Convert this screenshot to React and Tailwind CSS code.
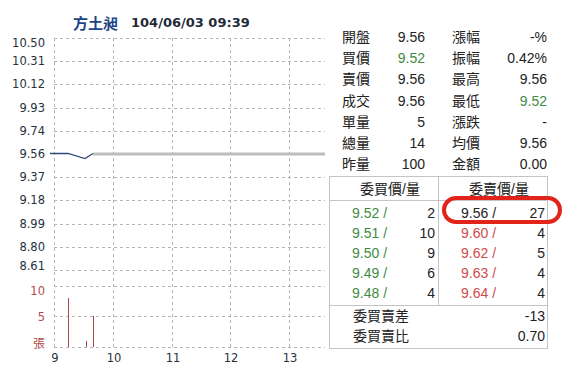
import React from "react";

// 分時走勢 + 五檔報價
const yTicks = ["10.50", "10.31", "10.12", "9.93", "9.74", "9.56", "9.37", "9.18", "8.99", "8.80", "8.61"];
const hours = [9, 10, 11, 12, 13];

const stats = [
  ["開盤", "9.56", "", "漲幅", "-%", ""],
  ["買價", "9.52", "text-[#3f8a44]", "振幅", "0.42%", ""],
  ["賣價", "9.56", "", "最高", "9.56", ""],
  ["成交", "9.56", "", "最低", "9.52", "text-[#3f8a44]"],
  ["單量", "5", "", "漲跌", "-", ""],
  ["總量", "14", "", "均價", "9.56", ""],
  ["昨量", "100", "", "金額", "0.00", ""],
];

const bids = [
  ["9.52", "2"],
  ["9.51", "10"],
  ["9.50", "9"],
  ["9.49", "6"],
  ["9.48", "4"],
];

const asks = [
  ["9.56", "27", "text-[#222]"],
  ["9.60", "4", "text-[#d04a4a]"],
  ["9.62", "5", "text-[#d04a4a]"],
  ["9.63", "4", "text-[#d04a4a]"],
  ["9.64", "4", "text-[#d04a4a]"],
];

const TOP = 38;
const STEP = 23.2;
const GRID_X = [54, 113, 172, 230, 289];

const gridH = yTicks
  .map((_, i) => Math.round(TOP + i * STEP) + 0.5)
  .filter((_, i) => i !== 5)
  .concat([286.5, 316.5, 347.5]);

function Chart() {
  const labelY = (i) => {
    const y = TOP + i * STEP;
    if (i === 0) return y + 5;
    if (i === yTicks.length - 1) return y - 4;
    return y;
  };
  return (
    <svg width="329" height="377" viewBox="0 0 329 377" className="absolute left-0 top-0">
      {/* 格線 */}
      {gridH.map((y) => (
        <line key={"h" + y} x1="54" x2="325" y1={y} y2={y} stroke="#b5b5b5" strokeWidth="1" strokeDasharray="3 3" shapeRendering="crispEdges" />
      ))}
      {GRID_X.map((x) => (
        <line key={"v" + x} x1={x + 0.5} x2={x + 0.5} y1={TOP} y2="347" stroke="#b5b5b5" strokeWidth="1" strokeDasharray="3 3" shapeRendering="crispEdges" />
      ))}

      {/* 平盤線 */}
      <line x1="93" x2="325" y1="154" y2="154" stroke="#bdbdbd" strokeWidth="3" />
      {/* 成交價 */}
      <polyline points="50,153.5 68,153.5 85,158.5 93,153.5" fill="none" stroke="#2f4a7a" strokeWidth="1.3" />

      {/* 成交量 */}
      <line x1="68.5" x2="68.5" y1="298" y2="347" stroke="#a84848" />
      <line x1="86.5" x2="86.5" y1="341" y2="347" stroke="#a84848" />
      <line x1="93.5" x2="93.5" y1="316" y2="347" stroke="#a84848" />

      {yTicks.map((t, i) => (
        <text key={t} x="45" y={labelY(i)} textAnchor="end" dominantBaseline="central" fill="#28323c" fontFamily="'DejaVu Sans', Verdana, sans-serif" fontSize="11.5">
          {t}
        </text>
      ))}
      <text x="45" y="291" textAnchor="end" dominantBaseline="central" fill="#b24c4c" fontFamily="'DejaVu Sans', sans-serif" fontSize="11.5">10</text>
      <text x="45" y="316.5" textAnchor="end" dominantBaseline="central" fill="#b24c4c" fontFamily="'DejaVu Sans', sans-serif" fontSize="11.5">5</text>
      <text x="45" y="342" textAnchor="end" dominantBaseline="central" fill="#b24c4c" fontFamily="'Noto Sans CJK TC', sans-serif" fontSize="12">張</text>

      {hours.map((h, i) => (
        <text key={h} x={GRID_X[i] + 1} y="358" textAnchor="middle" dominantBaseline="central" fill="#28323c" fontFamily="'DejaVu Sans', Verdana, sans-serif" fontSize="11.5">
          {h}
        </text>
      ))}
    </svg>
  );
}

export default function App() {
  return (
    <div className="flex w-[577px] h-[377px] bg-white text-[#222] font-['Liberation_Sans','Noto_Sans_CJK_TC',sans-serif] text-[14px] overflow-hidden">
      <div className="relative w-[329px] h-[377px]">
        <Chart />
        <div className="relative h-[34px] pt-[12px] pl-[73px] flex items-center leading-[18px]">
          <span className="text-[15px] font-bold text-[#1d4585] font-['Noto_Sans_CJK_TC',sans-serif]">方土昶</span>
          <span className="ml-[13px] text-[13px] font-bold text-[#1f2b3a] font-['DejaVu_Sans',sans-serif]">104/06/03 09:39</span>
        </div>
      </div>

      <div className="relative w-[219px] flex flex-col pt-[27px]">
        <div className="pl-[13px]">
          {stats.map(([l1, v1, c1, l2, v2, c2]) => (
            <div key={l1} className="flex h-[21.2px] leading-[21px]">
              <div className="w-[83px] flex justify-between">
                <span>{l1}</span>
                <span className={c1}>{v1}</span>
              </div>
              <div className="ml-[27px] w-[95px] flex justify-between">
                <span>{l2}</span>
                <span className={c2}>{v2}</span>
              </div>
            </div>
          ))}
        </div>

        <div className="mt-[1px] border border-[#c4c4c4]">
          <div className="grid grid-cols-[109px_1fr] h-[24px] leading-[24px] border-b border-[#c4c4c4]">
            <div className="border-r border-[#c4c4c4] text-center pl-[12px]">委買價/量</div>
            <div className="text-center pl-[12px]">委賣價/量</div>
          </div>
          <div className="grid grid-cols-[109px_1fr] border-b border-[#c4c4c4]">
            <div className="border-r border-[#c4c4c4] py-[2px] pl-[22px] pr-[3px]">
              {bids.map(([p, q]) => (
                <div key={p} className="flex justify-between h-[20px] leading-[20px]">
                  <span className="text-[#3f8a44]">{p} /</span>
                  <span>{q}</span>
                </div>
              ))}
            </div>
            <div className="py-[2px] pl-[22px] pr-[2px]">
              {asks.map(([p, q, c]) => (
                <div key={p} className="flex justify-between h-[20px] leading-[20px]">
                  <span className={c}>{p} /</span>
                  <span>{q}</span>
                </div>
              ))}
            </div>
          </div>
          <div className="pl-[23px] pr-[2px] pb-[2px]">
            <div className="flex justify-between h-[20px] leading-[20px]">
              <span>委買賣差</span>
              <span>-13</span>
            </div>
            <div className="flex justify-between h-[20px] leading-[20px]">
              <span>委買賣比</span>
              <span>0.70</span>
            </div>
          </div>
        </div>

        {/* 標註框 */}
        <div className="absolute left-[113px] top-[196px] w-[120px] h-[28px] border-[4px] border-[#e2231a] rounded-[14px]" />
      </div>
    </div>
  );
}
